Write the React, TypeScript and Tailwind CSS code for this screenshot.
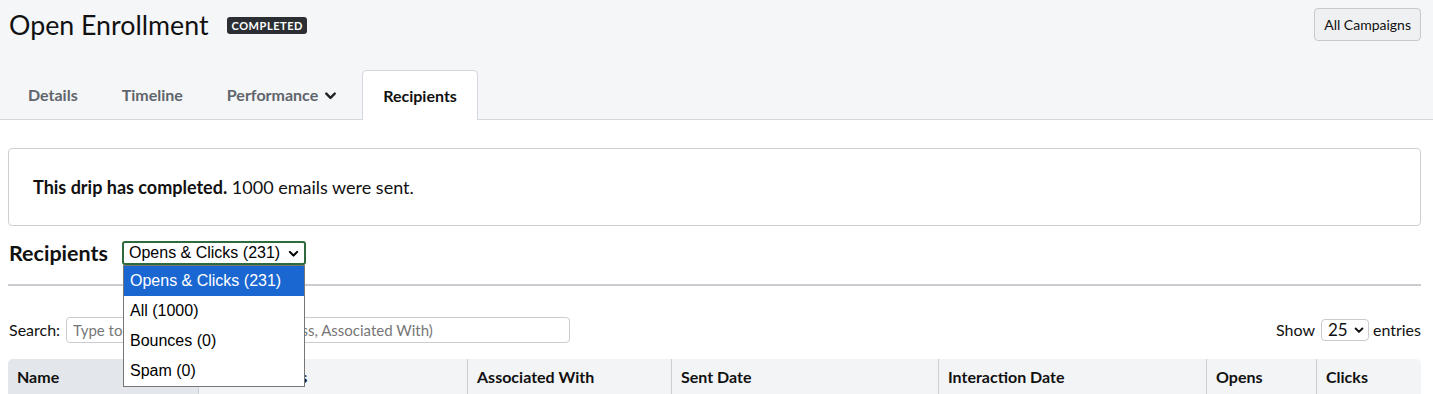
import React from 'react';

const tabs = ['Details', 'Timeline', 'Performance', 'Recipients'];

const columns = [
  { label: 'Name', w: 'w-[190px]', sorted: true },
  { label: 'Email Address', w: 'w-[269px]' },
  { label: 'Associated With', w: 'w-[204px]' },
  { label: 'Sent Date', w: 'w-[267px]' },
  { label: 'Interaction Date', w: 'w-[268px]' },
  { label: 'Opens', w: 'w-[110px]' },
  { label: 'Clicks', w: 'flex-1' },
];

const filterOptions = ['Opens & Clicks (231)', 'All (1000)', 'Bounces (0)', 'Spam (0)'];

const Chevron = ({ className }: { className?: string }) => (
  <svg viewBox="0 0 16 16" className={className} fill="none" stroke="currentColor" strokeWidth="2.6" strokeLinecap="round" strokeLinejoin="round">
    <path d="M3.5 6l4.5 4.5L12.5 6" />
  </svg>
);

const App: React.FC = () => {
  return (
    <div className="min-h-screen bg-white text-[#111] font-['Lato','Liberation_Sans',sans-serif]">
      {/* header strip */}
      <div className="bg-[#f5f6f8] border-b border-[#d3d6da]">
        <div className="pl-2 pr-3 pt-2 flex items-start justify-between">
          <div className="flex items-center pt-[1px]">
            <h1 className="text-[26.75px] leading-[32px] font-normal text-[#111] pl-[1px]">Open Enrollment</h1>
            <span className="ml-[19px] mt-[1px] bg-[#2b2f33] text-white text-[11px] leading-[17px] font-bold tracking-[0.05em] px-[4px] rounded-[3px]">
              COMPLETED
            </span>
          </div>
          <button className="h-[33px] px-[9px] text-[14px] text-[#111] bg-[#eef0f2] border border-[#c6cacf] rounded-[4px]">
            All Campaigns
          </button>
        </div>
        <div className="flex items-end gap-[4px] pl-2 mt-[29px] -mb-px">
          {tabs.map((t) => {
            const active = t === 'Recipients';
            return (
              <div
                key={t}
                className={
                  active
                    ? 'h-[50px] px-5 flex items-center bg-white border border-b-0 border-[#d3d6da] rounded-t-[5px] text-[16px] font-bold text-[#111]'
                    : 'h-[50px] px-5 flex items-center text-[16px] font-bold text-[#5f656c]'
                }
              >
                {t}
                {t === 'Performance' && <Chevron className="w-[15px] h-[15px] ml-[5px] text-[#222]" />}
              </div>
            );
          })}
        </div>
      </div>

      <div className="pl-2 pr-3">
        {/* status alert */}
        <div className="mt-[28px] border border-[#ccd0d4] rounded-[4px] px-6 h-[78px] flex items-center text-[18px]">
          <span>
            <strong className="font-bold">This drip has completed.</strong> 1000 emails were sent.
          </span>
        </div>

        {/* recipients heading + filter */}
        <div className="mt-[15px] flex items-center h-[24px]">
          <h2 className="text-[21.5px] font-bold pl-[1px]">Recipients</h2>
          <div className="relative ml-[14px]">
            <div className="w-[184px] h-[24px] border-2 border-[#2f6a3e] rounded-[3px] flex items-center justify-between pl-[5px] pr-[4px] font-['Liberation_Sans',Arial,sans-serif] text-[16px] text-black">
              <span>Opens &amp; Clicks (231)</span>
              <Chevron className="w-[13px] h-[13px] text-black" />
            </div>
            <div className="absolute left-[1px] top-[24px] w-[182px] bg-white border border-[#767676] z-10 font-['Liberation_Sans',Arial,sans-serif] text-[16px]">
              {filterOptions.map((o, i) => (
                <div
                  key={o}
                  className={
                    i === 0
                      ? 'h-[30px] flex items-center pl-[6px] bg-[#1a67d2] text-white'
                      : 'h-[30px] flex items-center pl-[6px] text-black'
                  }
                >
                  {o}
                </div>
              ))}
            </div>
          </div>
        </div>

        <div className="mt-[19px] h-[2px] bg-[#c9cdd1]" />

        {/* search + length */}
        <div className="mt-[31px] flex items-center justify-between text-[16px]">
          <label className="flex items-center pl-[1px]">
            Search:
            <input
              className="ml-[6px] w-[504px] h-[26px] border border-[#c9cdd1] rounded-[4px] px-[6px] text-[15px] placeholder:text-[#777]"
              placeholder="Type to search (Name, Email Address, Associated With)"
            />
          </label>
          <div className="flex items-center">
            Show
            <div className="ml-[6px] mr-[4px] w-[48px] h-[22px] border border-[#c9cdd1] rounded-[4px] flex items-center justify-between pl-[6px] pr-[3px] text-[17px]">
              <span>25</span>
              <Chevron className="w-[12px] h-[12px]" />
            </div>
            entries
          </div>
        </div>

        {/* table */}
        <div className="mt-[16px] rounded-t-[5px] overflow-hidden">
          <div className="flex h-[36px] bg-[#f3f4f6] text-[16px] font-bold">
            {columns.map((c, i) => (
              <div
                key={c.label}
                className={`${c.w} flex items-center pl-[9px] ${i > 0 ? 'border-l border-[#ccd0d4]' : ''} ${c.sorted ? 'bg-[#e3e6ea]' : ''}`}
              >
                {c.label}
              </div>
            ))}
          </div>
          <div className="flex h-[36px] text-[14px] border-b border-[#e3e6ea]">
            {columns.map((c) => (
              <div key={c.label} className={`${c.w} flex items-center pl-[9px]`} />
            ))}
          </div>
        </div>
      </div>
    </div>
  );
};

export default App;
